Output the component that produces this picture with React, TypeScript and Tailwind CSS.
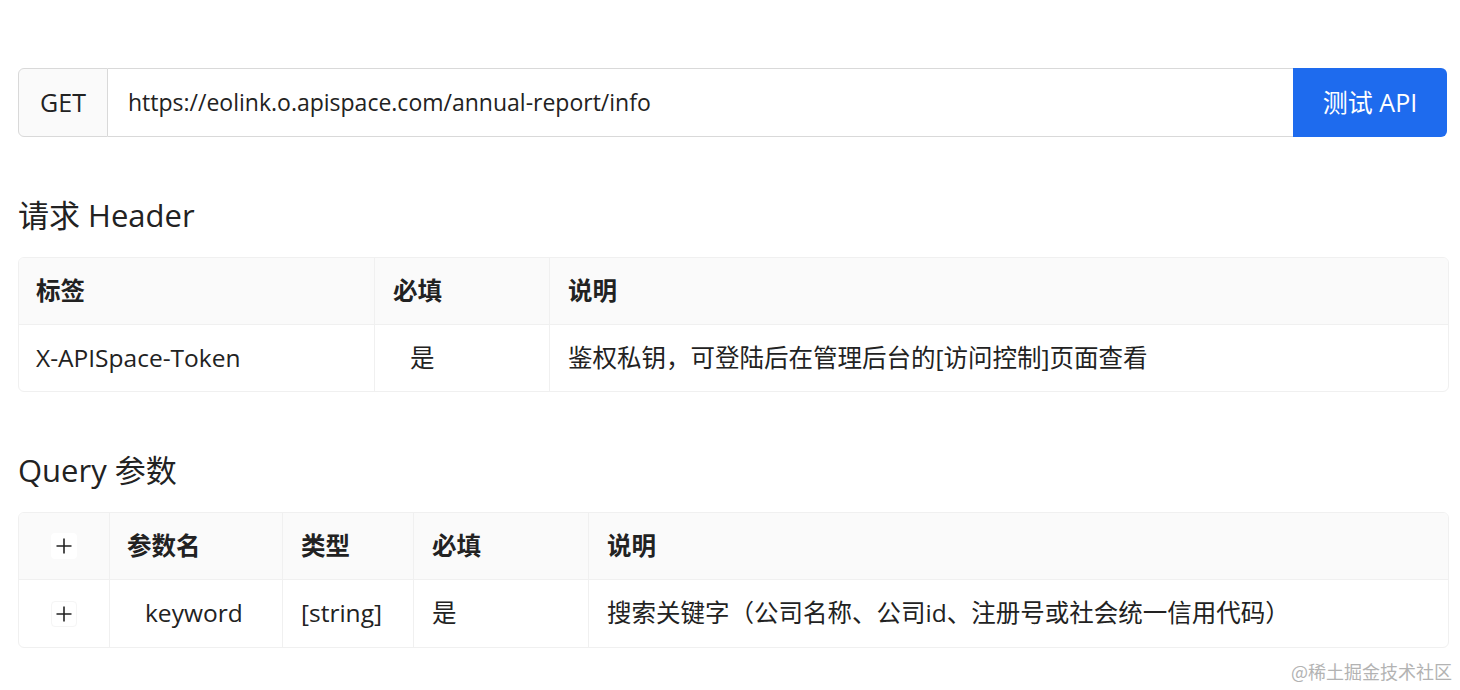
import React from "react";

const font = { fontFamily: '"Open Sans", "Noto Sans CJK SC", sans-serif' };

function PlusBox({ header }: { header?: boolean }) {
  return (
    <div className={`w-[26px] h-[26px] rounded-[4px] flex items-center justify-center ${header ? "bg-white" : "bg-white border border-[#f5f5f5]"}`}>
      <svg width="18" height="18" viewBox="0 0 18 18">
        <path d="M9 1.5v15M1.5 9h15" stroke="#222" strokeWidth="1.6" />
      </svg>
    </div>
  );
}

export default function App() {
  return (
    <div className="relative w-[1460px] h-[690px] bg-white text-[#222] overflow-hidden" style={font}>
      <div className="pl-[18px] pr-[12px] pt-[68px]">
        <div className="flex h-[69px] w-[1429px]">
          <div className="w-[90px] flex items-center justify-center bg-[#fafafa] border border-[#d9d9d9] rounded-l-[6px] text-[25px] text-[#222]">GET</div>
          <div className="flex-1 flex items-center border-y border-[#d9d9d9] pl-[20px] text-[23px] text-[#222]">https://eolink.o.apispace.com/annual-report/info</div>
          <div className="w-[154px] flex items-center justify-center bg-[#1e6bee] rounded-r-[6px] text-white text-[25px]">测试 API</div>
        </div>

        <div className="mt-[56px] text-[31px] leading-[44px] text-[#222]">请求 Header</div>
        <div className="mt-[20px] w-[1431px] border border-[#f0f0f0] rounded-[6px] overflow-hidden text-[24.5px]">
          <div className="flex h-[67px] bg-[#fafafa] border-b border-[#f0f0f0] font-bold">
            <div className="w-[356px] flex items-center pl-[17px] border-r border-[#f0f0f0]">标签</div>
            <div className="w-[175px] flex items-center pl-[18px] border-r border-[#f0f0f0]">必填</div>
            <div className="flex-1 flex items-center pl-[18px]">说明</div>
          </div>
          <div className="flex h-[66px]">
            <div className="w-[356px] flex items-center pl-[17px] border-r border-[#f0f0f0]">X-APISpace-Token</div>
            <div className="w-[175px] flex items-center pl-[35px] border-r border-[#f0f0f0]">是</div>
            <div className="flex-1 flex items-center pl-[18px]">鉴权私钥，可登陆后在管理后台的[访问控制]页面查看</div>
          </div>
        </div>

        <div className="mt-[56px] text-[31px] leading-[44px] text-[#222]">Query 参数</div>
        <div className="mt-[20px] w-[1431px] border border-[#f0f0f0] rounded-[6px] overflow-hidden text-[24.5px]">
          <div className="flex h-[67px] bg-[#fafafa] border-b border-[#f0f0f0] font-bold">
            <div className="w-[91px] flex items-center justify-center border-r border-[#f0f0f0]"><PlusBox header /></div>
            <div className="w-[173px] flex items-center pl-[17px] border-r border-[#f0f0f0]">参数名</div>
            <div className="w-[131px] flex items-center pl-[18px] border-r border-[#f0f0f0]">类型</div>
            <div className="w-[175px] flex items-center pl-[18px] border-r border-[#f0f0f0]">必填</div>
            <div className="flex-1 flex items-center pl-[18px]">说明</div>
          </div>
          <div className="flex h-[67px]">
            <div className="w-[91px] flex items-center justify-center border-r border-[#f0f0f0]"><PlusBox /></div>
            <div className="w-[173px] flex items-center pl-[35px] border-r border-[#f0f0f0]">keyword</div>
            <div className="w-[131px] flex items-center pl-[18px] border-r border-[#f0f0f0]">[string]</div>
            <div className="w-[175px] flex items-center pl-[18px] border-r border-[#f0f0f0]">是</div>
            <div className="flex-1 flex items-center pl-[18px]">搜索关键字（公司名称、公司id、注册号或社会统一信用代码）</div>
          </div>
        </div>
      </div>
      <div className="absolute right-[8px] bottom-[5px] text-[18px] text-[#b3b3b3]" style={{ fontFamily: '"Noto Sans CJK SC", sans-serif' }}>@稀土掘金技术社区</div>
    </div>
  );
}
